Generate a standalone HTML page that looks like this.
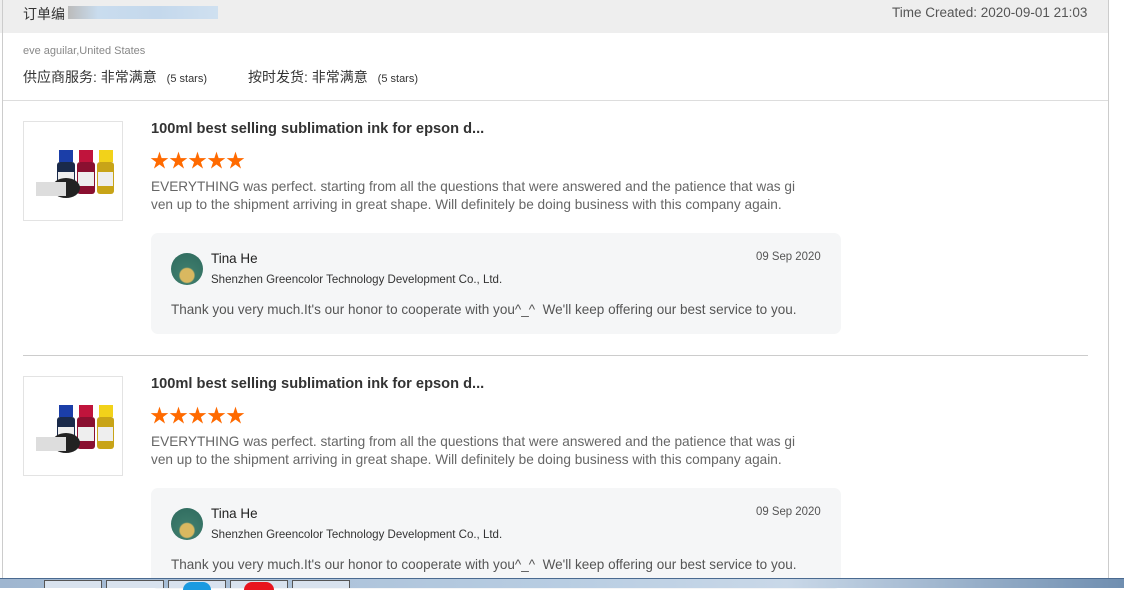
<!DOCTYPE html>
<html><head><meta charset="utf-8"><style>
*{margin:0;padding:0;box-sizing:border-box}
body{width:1124px;height:588px;overflow:hidden;background:#fff;font-family:"Liberation Sans","Noto Sans CJK SC",sans-serif;position:relative;color:#333}
.a{position:absolute;white-space:nowrap}
.s{transform-origin:0 0;display:inline-block}
.star{color:#ff6a00;font-size:19px;letter-spacing:0px}
.box{position:absolute;left:151px;width:690px;height:101px;background:#f5f6f7;border-radius:7px}
.img{position:absolute;left:23px;width:100px;height:100px;border:1px solid #e3e3e3;background:#fff}
</style></head><body>
<div class="a" style="left:0;top:0;width:1108px;height:33px;background:#eeeeee"></div>
<div class="a" style="left:2px;top:0;width:1px;height:580px;background:#ccc"></div>
<div class="a" style="left:1108px;top:0;width:1px;height:580px;background:#ccc"></div>
<div class="a" style="left:23px;top:4px;font-size:14px;color:#333">订单编</div>
<div class="a" style="left:68px;top:6px;width:150px;height:13px;background:linear-gradient(90deg,#bbb,#c9dcee 20%,#c4d8ec 60%,#cfe0f0)"></div>
<div class="a" style="left:892px;top:5px;font-size:13.5px;color:#555">Time Created: 2020-09-01 21:03</div>
<div class="a" style="left:23px;top:45px;font-size:11px;color:#888">eve aguilar,United States</div>
<div class="a" style="left:23px;top:67px;font-size:14px;color:#333">供应商服务: 非常满意 <span style="font-size:11px;margin-left:6px">(5 stars)</span></div>
<div class="a" style="left:248px;top:67px;font-size:14px;color:#333">按时发货: 非常满意 <span style="font-size:11px;margin-left:6px">(5 stars)</span></div>
<div class="a" style="left:3px;top:100px;width:1105px;height:1px;background:#ddd"></div>

<!-- item 1 -->
<div class="img" style="top:121px"><svg width="100" height="100" viewBox="0 0 100 100"><rect x="35" y="28" width="14" height="12" fill="#1b3ea8"/><rect x="33" y="40" width="18" height="32" rx="3" fill="#1a2a4a"/><rect x="55" y="28" width="14" height="12" fill="#c0143c"/><rect x="53" y="40" width="18" height="32" rx="3" fill="#8a1030"/><rect x="75" y="28" width="14" height="12" fill="#f2d21a"/><rect x="73" y="40" width="17" height="32" rx="3" fill="#c8a418"/><rect x="34" y="50" width="16" height="14" fill="#eee"/><rect x="54" y="50" width="16" height="14" fill="#eee"/><rect x="74" y="50" width="15" height="14" fill="#eee"/><ellipse cx="42" cy="66" rx="14" ry="10" fill="#222"/><rect x="12" y="60" width="30" height="14" fill="#ddd"/></svg></div>
<div class="a" style="left:151px;top:120px;font-size:15px;font-weight:bold;color:#333"><span class="s" style="transform:scaleX(0.975)">100ml best selling sublimation ink for epson d...</span></div>
<div class="a star" style="left:150px;top:146px">★★★★★</div>
<div class="a" style="left:151px;top:177px;font-size:14px;color:#666;line-height:18px"><span class="s" style="transform:scaleX(0.974)">EVERYTHING was perfect. starting from all the questions that were answered and the patience that was gi<br>ven up to the shipment arriving in great shape. Will definitely be doing business with this company again.</span></div>
<div class="box" style="top:233px"></div>
<div class="a" style="left:171px;top:253px;width:32px;height:32px;border-radius:50%;background:radial-gradient(circle at 50% 70%,#d9b860 25%,#3c7a6a 30%,#2e6a5e)"></div>
<div class="a" style="left:211px;top:250px;font-size:14px;color:#222"><span class="s" style="transform:scaleX(0.96)">Tina He</span></div>
<div class="a" style="left:211px;top:272px;font-size:12px;color:#333"><span class="s" style="transform:scaleX(0.96)">Shenzhen Greencolor Technology Development Co., Ltd.</span></div>
<div class="a" style="left:756px;top:249px;font-size:12px;color:#555"><span class="s" style="transform:scaleX(0.95)">09 Sep 2020</span></div>
<div class="a" style="left:171px;top:301px;font-size:14px;color:#555"><span class="s" style="transform:scaleX(0.966)">Thank you very much.It's our honor to cooperate with you^_^&nbsp; We'll keep offering our best service to you.</span></div>
<div class="a" style="left:23px;top:355px;width:1065px;height:1px;background:#ccc"></div>

<!-- item 2 -->
<div class="img" style="top:376px"><svg width="100" height="100" viewBox="0 0 100 100"><rect x="35" y="28" width="14" height="12" fill="#1b3ea8"/><rect x="33" y="40" width="18" height="32" rx="3" fill="#1a2a4a"/><rect x="55" y="28" width="14" height="12" fill="#c0143c"/><rect x="53" y="40" width="18" height="32" rx="3" fill="#8a1030"/><rect x="75" y="28" width="14" height="12" fill="#f2d21a"/><rect x="73" y="40" width="17" height="32" rx="3" fill="#c8a418"/><rect x="34" y="50" width="16" height="14" fill="#eee"/><rect x="54" y="50" width="16" height="14" fill="#eee"/><rect x="74" y="50" width="15" height="14" fill="#eee"/><ellipse cx="42" cy="66" rx="14" ry="10" fill="#222"/><rect x="12" y="60" width="30" height="14" fill="#ddd"/></svg></div>
<div class="a" style="left:151px;top:375px;font-size:15px;font-weight:bold;color:#333"><span class="s" style="transform:scaleX(0.975)">100ml best selling sublimation ink for epson d...</span></div>
<div class="a star" style="left:150px;top:401px">★★★★★</div>
<div class="a" style="left:151px;top:432px;font-size:14px;color:#666;line-height:18px"><span class="s" style="transform:scaleX(0.974)">EVERYTHING was perfect. starting from all the questions that were answered and the patience that was gi<br>ven up to the shipment arriving in great shape. Will definitely be doing business with this company again.</span></div>
<div class="box" style="top:488px"></div>
<div class="a" style="left:171px;top:508px;width:32px;height:32px;border-radius:50%;background:radial-gradient(circle at 50% 70%,#d9b860 25%,#3c7a6a 30%,#2e6a5e)"></div>
<div class="a" style="left:211px;top:505px;font-size:14px;color:#222"><span class="s" style="transform:scaleX(0.96)">Tina He</span></div>
<div class="a" style="left:211px;top:527px;font-size:12px;color:#333"><span class="s" style="transform:scaleX(0.96)">Shenzhen Greencolor Technology Development Co., Ltd.</span></div>
<div class="a" style="left:756px;top:504px;font-size:12px;color:#555"><span class="s" style="transform:scaleX(0.95)">09 Sep 2020</span></div>
<div class="a" style="left:171px;top:556px;font-size:14px;color:#555"><span class="s" style="transform:scaleX(0.966)">Thank you very much.It's our honor to cooperate with you^_^&nbsp; We'll keep offering our best service to you.</span></div>

<!-- taskbar -->
<div class="a" style="left:0;top:578px;width:1124px;height:10px;background:linear-gradient(90deg,#9fb6d0,#b8cde2 50%,#c9d8e8 70%,#6f8eb0);border-top:1px solid #4a6a90"></div>
<div class="a" style="left:44px;top:580px;width:58px;height:8px;border:1px solid #555;border-bottom:none;background:#d8e2ee"></div>
<div class="a" style="left:106px;top:580px;width:58px;height:8px;border:1px solid #555;border-bottom:none;background:#d8e2ee"></div>
<div class="a" style="left:168px;top:580px;width:58px;height:8px;border:1px solid #555;border-bottom:none;background:#d8e2ee"></div>
<div class="a" style="left:230px;top:580px;width:58px;height:8px;border:1px solid #555;border-bottom:none;background:#d8e2ee"></div>
<div class="a" style="left:292px;top:580px;width:58px;height:8px;border:1px solid #555;border-bottom:none;background:#d8e2ee"></div>
<div class="a" style="left:183px;top:582px;width:28px;height:8px;border-radius:14px 14px 0 0;background:#1a9ae0"></div>
<div class="a" style="left:244px;top:582px;width:30px;height:8px;border-radius:14px 14px 0 0;background:#e8141e"></div>
</body></html>
